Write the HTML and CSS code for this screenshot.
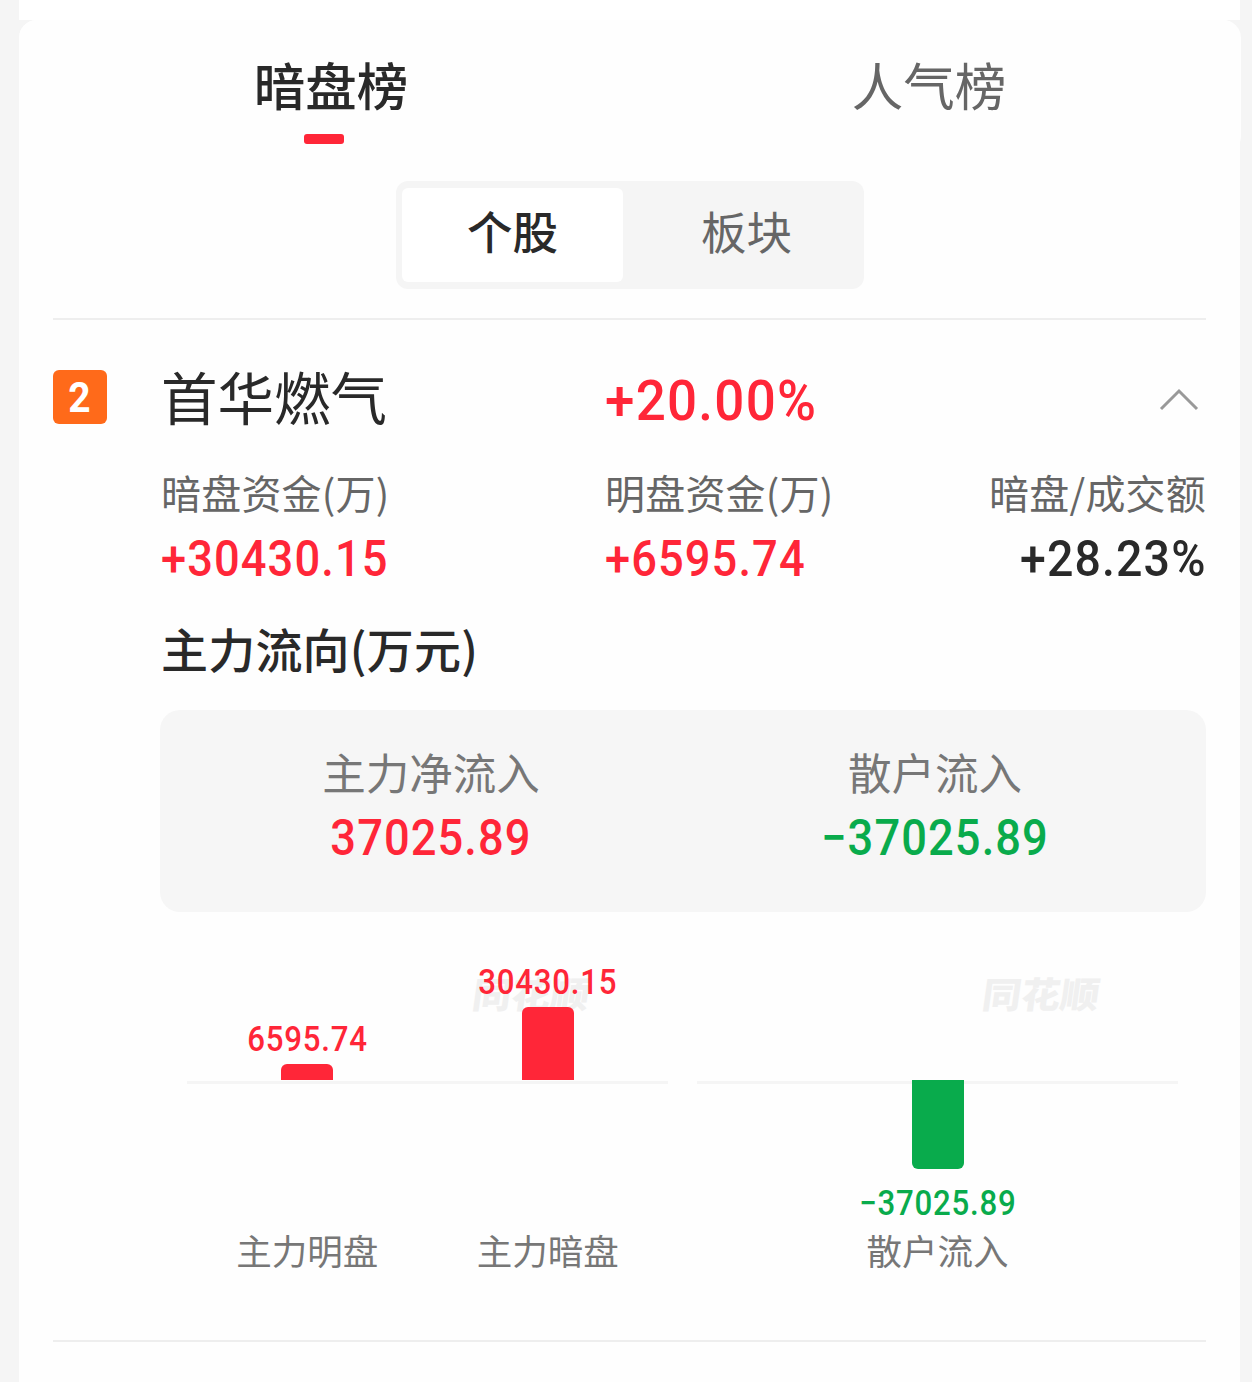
FILE: index.html
```html
<!DOCTYPE html>
<html lang="zh-CN">
<head>
    <meta charset="UTF-8">
    <meta name="viewport" content="width=device-width, initial-scale=1.0">
    <title>暗盘榜</title>
    <link rel="stylesheet" href="styles.css">
</head>
<body>

<div class="prev-card"></div>
<div class="card">
    <div class="card-top">
        <div class="tabs">
            <div class="tab active">暗盘榜</div>
            <div class="tab">人气榜</div>
        </div>
    </div>

    <div class="switch">
        <div class="switch-item active">个股</div>
        <div class="switch-item">板块</div>
    </div>

    <div class="stock">
        <div class="stock-head">
            <div class="rank"><span class="num">2</span></div>
            <div class="name">首华燃气</div>
            <div class="change num red">+20.00%</div>
            <svg class="arrow" width="40" height="24" viewBox="0 0 40 24">
                <path d="M2 21 L20 3 L38 21" fill="none" stroke="#999" stroke-width="3"/>
            </svg>
        </div>

        <div class="stock-data">
            <div class="label">暗盘资金(万)</div>
            <div class="label">明盘资金(万)</div>
            <div class="label right">暗盘/成交额</div>
            <div class="value num red">+30430.15</div>
            <div class="value num red">+6595.74</div>
            <div class="value num right">+28.23%</div>
        </div>

        <div class="flow">
            <h2>主力流向(万元)</h2>
            <div class="summary">
                <div class="summary-item">
                    <div class="summary-label">主力净流入</div>
                    <div class="value num red">37025.89</div>
                </div>
                <div class="summary-item">
                    <div class="summary-label">散户流入</div>
                    <div class="value num green">−37025.89</div>
                </div>
            </div>

            <div class="charts">
                <div class="chart">
                    <div class="watermark">同花顺</div>
                    <div class="plot-up">
                        <div class="col">
                            <span class="bar-value num red">6595.74</span>
                            <div class="bar bar-red" style="height: 16px"></div>
                        </div>
                        <div class="col">
                            <span class="bar-value num red">30430.15</span>
                            <div class="bar bar-red" style="height: 73px"></div>
                        </div>
                    </div>
                    <div class="axis"></div>
                    <div class="plot-down"></div>
                    <div class="names">
                        <span class="col">主力明盘</span>
                        <span class="col">主力暗盘</span>
                    </div>
                </div>
                <div class="chart">
                    <div class="watermark">同花顺</div>
                    <div class="plot-up"></div>
                    <div class="axis"></div>
                    <div class="plot-down">
                        <div class="col">
                            <div class="bar bar-green" style="height: 89px"></div>
                            <span class="bar-value num green">−37025.89</span>
                        </div>
                    </div>
                    <div class="names">
                        <span class="col">散户流入</span>
                    </div>
                </div>
            </div>
        </div>
    </div>
</div>

</body>
</html>
```
FILE: styles.css
```css
* {
    box-sizing: border-box;
}
body {
    margin: 0;
    height: 1382px;
    overflow: hidden;
    background-color: #f5f5f5;
    color: #292929;
    font-family: "Noto Sans CJK SC", sans-serif;
}
/* narrow digits */
.num {
    font-family: Roboto, "Noto Sans CJK SC", sans-serif;
    font-weight: 500;
    letter-spacing: 0.024em;
    transform: scaleX(0.905);
}
.red {
    color: #ff2638;
}
.green {
    color: #09ab4c;
}
.right {
    text-align: right;
}
/* card */
.prev-card {
    height: 20px;
    margin: 0 12px 0 19px;
    background-color: #fff;
}
.card {
    height: 1400px;
    margin: 0 12px 0 19px;
    background-color: #fefefe;
    border-radius: 18px 18px 0 0;
}
.card-top {
    height: 134px;
    margin-right: -1px;
    padding: 0 13px;
    background-color: #fefefe;
    border-radius: 18px;
}
/* tabs */
.tabs {
    display: flex;
}
.tab {
    flex: 1;
    padding-top: 34px;
    text-align: center;
    font-size: 51.5px;
    line-height: 60px;
    color: #666;
}
.tab.active {
    color: #292929;
    font-weight: 500;
}
.tab.active::after {
    content: "";
    display: block;
    width: 40px;
    height: 10px;
    margin: 20px auto 0;
    border-radius: 3px;
    background-color: #ff2638;
    transform: translateX(-7px);
}
/* switch */
.switch {
    display: flex;
    width: 468px;
    height: 108px;
    margin: 27px 0 29px 377px;
    padding: 7px 6px;
    background-color: #f5f5f5;
    border-radius: 12px;
}
.switch-item {
    width: 221px;
    border-radius: 6px;
    text-align: center;
    font-size: 45.5px;
    line-height: 85px;
    color: #666;
}
.switch-item:last-child {
    margin-left: 13px;
}
.switch-item.active {
    background-color: #fff;
    color: #292929;
    font-weight: 500;
}
/* stock */
.stock {
    height: 1024px;
    margin: 0 34px;
    padding-top: 50px;
    border-top: 2px solid #eee;
    border-bottom: 2px solid #eee;
}
.stock-head {
    display: grid;
    grid-template-columns: 108px 444px 1fr 47px;
    height: 54px;
}
.rank {
    width: 54px;
    height: 54px;
    border-radius: 6px;
    background-color: #ff6a1a;
    color: #fff;
    text-align: center;
    font-size: 43px;
    line-height: 55px;
}
.rank .num {
    display: block;
    font-weight: 700;
}
.name {
    font-size: 56.5px;
    line-height: 51px;
}
.change {
    font-size: 56px;
    line-height: 62px;
    transform: scaleX(0.945);
    transform-origin: left;
}
.arrow {
    margin-top: 18px;
}
.stock-data {
    display: grid;
    grid-template-columns: 444px 1fr 1fr;
    margin: 37px 0 0 108px;
}
.stock-data .value {
    transform-origin: left;
}
.stock-data .value.right {
    transform: scaleX(0.93);
    transform-origin: right;
}
.label {
    font-size: 40px;
    line-height: 62px;
    letter-spacing: 0.2px;
    color: #666;
}
.value {
    font-size: 50px;
    line-height: 72px;
}
.flow {
    margin: 21px 0 0 107px;
}
.flow h2 {
    margin: 0 0 0 1px;
    font-size: 47px;
    font-weight: 500;
    line-height: 64px;
    letter-spacing: 0.2px;
}
/* summary */
.summary {
    display: flex;
    height: 202px;
    margin-top: 30px;
    padding: 31px 19px 0;
    background-color: #f6f6f6;
    border-radius: 20px;
}
.summary-item {
    flex: 1;
    text-align: center;
}
.summary-label {
    font-size: 43.5px;
    line-height: 62px;
    color: #777;
}
.summary .value {
    line-height: 70px;
}
/* charts */
.charts {
    display: flex;
    gap: 29px;
    padding: 0 27px;
}
.chart {
    position: relative;
    width: 481px;
}
.watermark {
    position: absolute;
    top: 54px;
    left: 286px;
    font-size: 39px;
    font-weight: 900;
    line-height: 52px;
    color: #f0f0f0;
    transform: skewX(-8deg) scaleY(0.92);
}
.plot-up, .plot-down, .names {
    position: relative;
    display: flex;
}
.plot-up {
    height: 168px;
    align-items: flex-end;
}
.plot-down {
    height: 148px;
}
.axis {
    height: 3px;
    margin: 1px 0 -4px;
    background-color: #f5f5f5;
}
.col {
    display: flex;
    flex: 1;
    flex-direction: column;
    align-items: center;
}
.bar {
    width: 52px;
}
.bar-red {
    background-color: #ff2638;
    border-radius: 6px 6px 0 0;
}
.bar-green {
    background-color: #09ab4c;
    border-radius: 0 0 6px 6px;
}
.bar-value {
    margin-bottom: 5px;
    font-size: 34.5px;
    line-height: 40px;
}
.bar-green + .bar-value {
    margin-top: 14px;
}
.names {
    font-size: 35.5px;
    line-height: 44px;
    color: #777;
}
```
